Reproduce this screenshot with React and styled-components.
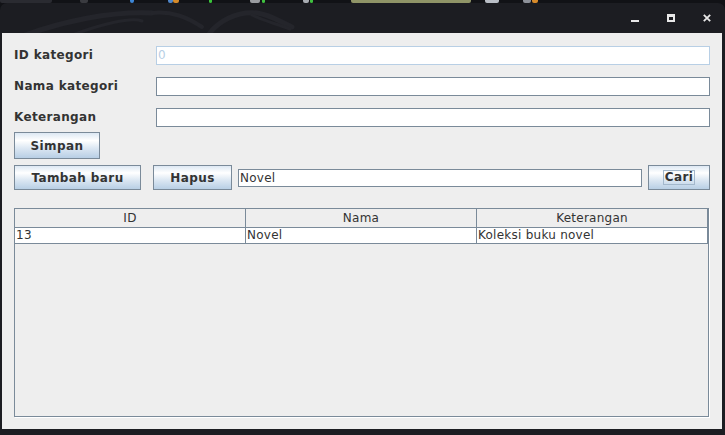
import React from "react";
import styled, { createGlobalStyle } from "styled-components";

const GlobalStyle = createGlobalStyle`
  html, body {
    margin: 0;
    padding: 0;
    background: #111216;
  }
  * {
    box-sizing: border-box;
  }
`;

const Screen = styled.div`
  width: 725px;
  height: 435px;
  display: flex;
  flex-direction: column;
  overflow: hidden;
  background: #111216;
  font-family: "DejaVu Sans", "Liberation Sans", sans-serif;
`;

const Taskbar = styled.div`
  height: 3px;
  display: flex;
  align-items: stretch;
`;

const TrayBit = styled.span`
  width: ${p => p.w}px;
  margin-left: ${p => p.gap}px;
  background: ${p => p.color};
  border-radius: 0 0 2px 2px;
`;

const Window = styled.div`
  flex: 1;
  display: flex;
  flex-direction: column;
  background: #1c1d22;
  border-radius: 7px 7px 0 0;
  padding: 0 3px 6px 2px;
`;

const TitleBar = styled.div`
  height: 30px;
  display: flex;
  align-items: stretch;
  overflow: hidden;
`;

const Watermark = styled.svg`
  width: 330px;
  height: 30px;
  flex: none;
`;

const Spacer = styled.div`
  flex: 1;
`;

const TitleButtons = styled.div`
  display: flex;
  align-items: flex-start;
  padding: 11px 11px 0 0;
  gap: 28px;
`;

const Glyph = styled.svg`
  width: 8px;
  height: 8px;
  display: block;
`;

const Content = styled.div`
  height: 396px;
  background: #eeeeee;
  display: flex;
  flex-direction: column;
  padding: 12px;
  color: #333333;
  font-size: 12px;
  letter-spacing: 0.25px;
`;

const FormRow = styled.div`
  display: grid;
  grid-template-columns: 142px 1fr;
  align-items: center;
  height: 19px;
  margin-bottom: ${p => (p.last ? 6 : 12)}px;
`;

const Label = styled.label`
  font-weight: bold;
  font-size: 12px;
  letter-spacing: 0.35px;
  line-height: 19px;
  padding-top: 1px;
`;

const Field = styled.div`
  height: ${p => p.h || 19}px;
  background: #ffffff;
  border: 1px solid ${p => (p.disabled ? "#b8cfe5" : "#7a8a99")};
  color: ${p => (p.disabled ? "#b8cfe5" : "#333333")};
  font-size: 12px;
  line-height: ${p => (p.h || 19) - 2}px;
  padding-left: 1px;
  white-space: nowrap;
  overflow: hidden;
  flex: ${p => (p.grow ? 1 : "none")};
  margin: ${p => p.m || 0};
`;

const Button = styled.div`
  width: ${p => p.w}px;
  height: ${p => p.h || 25}px;
  flex: none;
  margin-left: ${p => p.ml || 0}px;
  display: flex;
  align-items: center;
  justify-content: center;
  border: 1px solid #7a8a99;
  background: linear-gradient(
    to bottom,
    #dde8f3 0%,
    #ffffff 30%,
    #dde8f3 60%,
    #b8cfe5 100%
  );
  font-weight: bold;
  font-size: 12px;
  letter-spacing: 0.4px;
  color: #333333;
`;

const Focus = styled.span`
  border: 1px solid #a3b8cc;
  padding: 0 1px;
  line-height: 13px;
`;

const ButtonRow = styled.div`
  display: flex;
  align-items: center;
  height: ${p => p.h}px;
  margin-bottom: ${p => p.mb}px;
`;

const ScrollPane = styled.div`
  flex: 1;
  width: 695px;
  display: flex;
  flex-direction: column;
  border: 1px solid #7a8a99;
  box-shadow: 1px 1px 0 #ffffff;
  background: #eeeeee;
`;

const TableRow = styled.div`
  display: grid;
  grid-template-columns: repeat(3, 231px);
  height: ${p => p.h}px;
  background: ${p => (p.header ? "#eeeeee" : "#ffffff")};
  border-bottom: 1px solid #7a8a99;
`;

const Cell = styled.div`
  border-right: 1px solid #7a8a99;
  font-size: 12px;
  color: #333333;
  line-height: ${p => p.lh}px;
  text-align: ${p => (p.header ? "center" : "left")};
  padding-left: ${p => (p.header ? 0 : 1)}px;
  white-space: nowrap;
  overflow: hidden;
`;

const trayBits = [
  { w: 52, gap: 0, color: "#2a2b31" },
  { w: 8, gap: 28, color: "#3a3b40" },
  { w: 4, gap: 42, color: "#3d86d6" },
  { w: 5, gap: 34, color: "#4f86c9" },
  { w: 6, gap: 0, color: "#d48a2a" },
  { w: 3, gap: 30, color: "#39c43a" },
  { w: 10, gap: 38, color: "#9a9ca0" },
  { w: 3, gap: 2, color: "#3fbf3f" },
  { w: 6, gap: 38, color: "#a8acb2" },
  { w: 3, gap: 1, color: "#3fbf3f" },
  { w: 120, gap: 38, color: "#8f9467" },
  { w: 14, gap: 14, color: "#b9bec6" },
  { w: 8, gap: 24, color: "#8d9199" },
  { w: 6, gap: 1, color: "#d68a2a" }
];

const columns = ["ID", "Nama", "Keterangan"];
const rows = [{ id: "13", nama: "Novel", keterangan: "Koleksi buku novel" }];

export default function App() {
  return (
    <>
      <GlobalStyle />
      <Screen>
        <Taskbar>
          {trayBits.map((b, i) => (
            <TrayBit key={i} w={b.w} gap={b.gap} color={b.color} />
          ))}
        </Taskbar>
        <Window>
          <TitleBar>
            <Watermark viewBox="0 0 330 30">
              <g fill="none" stroke="#24252b" strokeWidth="5" strokeLinecap="round">
                <path d="M18 34 C60 18 110 8 150 10" />
                <path d="M60 36 C100 20 130 14 140 18" strokeWidth="3" />
                <path d="M150 10 C170 8 185 14 200 24" strokeWidth="4" />
                <path d="M205 34 C215 18 235 8 255 10 C270 12 280 20 290 24" />
                <path d="M250 12 C262 18 272 20 288 26" strokeWidth="3" />
              </g>
            </Watermark>
            <Spacer />
            <TitleButtons>
              <Glyph viewBox="0 0 8 8">
                <rect x="0" y="6" width="8" height="2" fill="#e8e8e8" />
              </Glyph>
              <Glyph viewBox="0 0 8 8">
                <path d="M0 0H8V8H0Z M2 3H6V6H2Z" fill="#e8e8e8" fillRule="evenodd" />
              </Glyph>
              <Glyph viewBox="0 0 8 8">
                <path d="M0.8 0.8L7.2 7.2M7.2 0.8L0.8 7.2" stroke="#e8e8e8" strokeWidth="1.8" />
              </Glyph>
            </TitleButtons>
          </TitleBar>
          <Content>
            <FormRow>
              <Label>ID kategori</Label>
              <Field disabled>0</Field>
            </FormRow>
            <FormRow>
              <Label>Nama kategori</Label>
              <Field />
            </FormRow>
            <FormRow last>
              <Label>Keterangan</Label>
              <Field />
            </FormRow>
            <ButtonRow h={27} mb={6}>
              <Button w={86} h={27}>Simpan</Button>
            </ButtonRow>
            <ButtonRow h={25} mb={18}>
              <Button w={127}>Tambah baru</Button>
              <Button w={79} ml={12}>Hapus</Button>
              <Field h={18} grow m="0 6px">Novel</Field>
              <Button w={62}>
                <Focus>Cari</Focus>
              </Button>
            </ButtonRow>
            <ScrollPane>
              <TableRow header h={19}>
                {columns.map(c => (
                  <Cell header lh={18} key={c}>{c}</Cell>
                ))}
              </TableRow>
              {rows.map(r => (
                <TableRow h={16} key={r.id}>
                  <Cell lh={15}>{r.id}</Cell>
                  <Cell lh={15}>{r.nama}</Cell>
                  <Cell lh={15}>{r.keterangan}</Cell>
                </TableRow>
              ))}
            </ScrollPane>
          </Content>
        </Window>
      </Screen>
    </>
  );
}
